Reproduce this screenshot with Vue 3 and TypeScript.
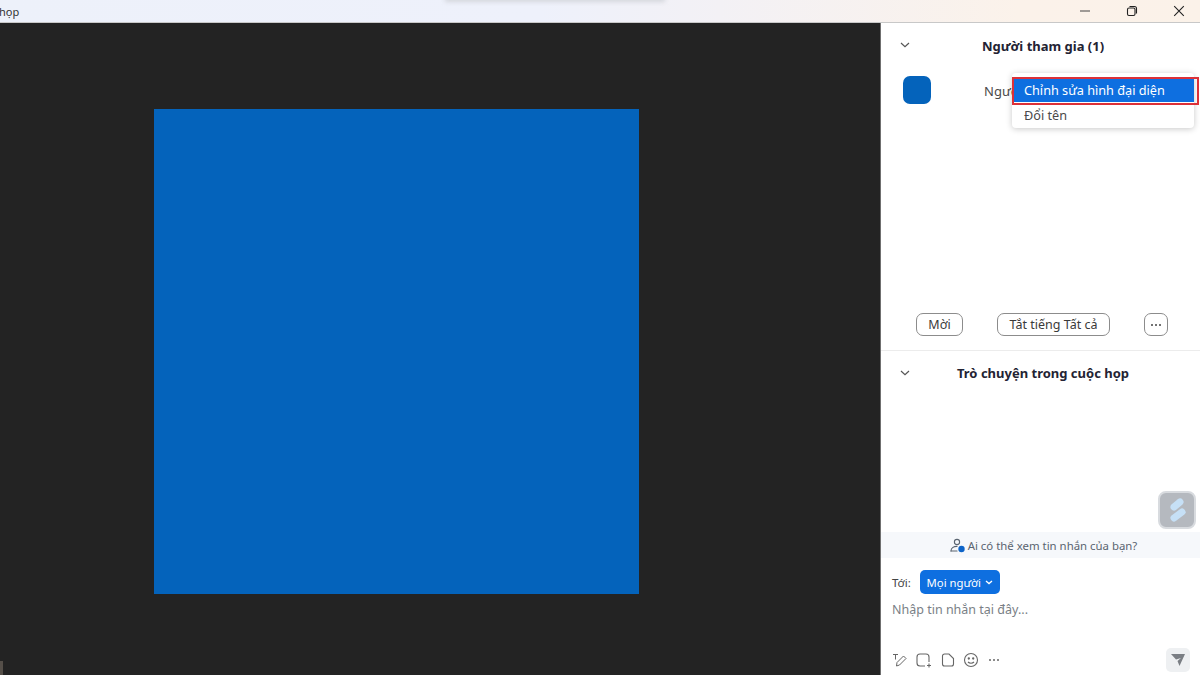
<template>
  <div class="window">
    <header class="titlebar">
      <span class="title">họp</span>
      <div class="win-controls">
        <svg width="12" height="12" viewBox="0 0 12 12"><path d="M1 6h10" stroke="#444" stroke-width="1" fill="none" /></svg>
        <svg width="12" height="12" viewBox="0 0 12 12" fill="none" stroke="#222" stroke-width="1.1">
          <rect x="1.5" y="3" width="7.5" height="7.5" rx="1.5" />
          <path d="M3.5 1.5h5a2 2 0 0 1 2 2v5" />
        </svg>
        <svg width="12" height="12" viewBox="0 0 12 12"><path d="M1.2 1.2l9.6 9.6M10.8 1.2l-9.6 9.6" stroke="#222" stroke-width="1.1" fill="none" /></svg>
      </div>
      <div class="top-shadow"></div>
    </header>

    <div class="body">
      <main class="stage">
        <div class="video-tile"></div>
      </main>

      <aside class="panel">
        <section class="participants">
          <div class="section-head">
            <svg class="chev" width="10" height="6" viewBox="0 0 10 6"><path d="M1 1l4 3.6L9 1" stroke="#555" stroke-width="1.2" fill="none" /></svg>
            <h2>Người tham gia (1)</h2>
          </div>
          <div class="person">
            <div class="avatar"></div>
            <span class="person-name">Người</span>
            <div class="menu">
              <div v-for="item in menuItems" :key="item.label" class="menu-item" :class="{ active: item.active }">{{ item.label }}</div>
              <div class="red-box"></div>
            </div>
          </div>
          <div class="actions">
            <button type="button" class="btn btn-invite">Mời</button>
            <button type="button" class="btn btn-mute">Tắt tiếng Tất cả</button>
            <button type="button" class="btn btn-more">
              <svg width="12" height="4" viewBox="0 0 12 4" fill="#444"><circle cx="2" cy="2" r="1" /><circle cx="6" cy="2" r="1" /><circle cx="10" cy="2" r="1" /></svg>
            </button>
          </div>
        </section>

        <section class="chat">
          <div class="section-head chat-head">
            <svg class="chev" width="10" height="6" viewBox="0 0 10 6"><path d="M1 1l4 3.6L9 1" stroke="#555" stroke-width="1.2" fill="none" /></svg>
            <h2>Trò chuyện trong cuộc họp</h2>
          </div>
          <div class="messages">
            <div class="float-badge">
              <svg width="22" height="28" viewBox="0 0 22 28" fill="none" stroke="#c6e0f6" stroke-width="7" stroke-linecap="round">
                <path d="M14 6L8 11" />
                <path d="M16 16L8 22" />
              </svg>
            </div>
          </div>
          <div class="privacy">
            <svg width="16" height="15" viewBox="0 0 16 15" fill="none">
              <circle cx="7" cy="4" r="2.6" stroke="#5a6470" stroke-width="1.1" />
              <path d="M1 13c0-3 3-4.600 6-4.600" stroke="#5a6470" stroke-width="1.100" stroke-linecap="round" />
              <path d="M1 13h6" stroke="#5a6470" stroke-width="1.100" stroke-linecap="round" />
              <circle cx="11.500" cy="11" r="3.200" fill="#0e64c8" />
            </svg>
            <span>Ai có thể xem tin nhắn của bạn?</span>
          </div>
          <div class="to-row">
            <span class="to-label">Tới:</span>
            <button type="button" class="to-btn">
              Mọi người
              <svg width="8" height="5" viewBox="0 0 8 5"><path d="M1 1l3 2.600L7 1" stroke="#fff" stroke-width="1.300" fill="none" /></svg>
            </button>
          </div>
          <div class="placeholder">Nhập tin nhắn tại đây...</div>
          <div class="toolbar">
            <svg width="16" height="16" viewBox="0 0 16 16" fill="none" stroke="#666" stroke-width="1">
              <path d="M1 2.500h5M3.500 2.500v5" />
              <path d="M4.500 14l.5-3.500L11.500 4l2.500 2.500L7.500 13z" />
            </svg>
            <svg width="17" height="16" viewBox="0 0 17 16" fill="none" stroke="#666" stroke-width="1.100">
              <path d="M9 14H4a3 3 0 0 1-3-3V5a3 3 0 0 1 3-3h6a3 3 0 0 1 3 3v5" />
              <path d="M13 11.500v4M11 13.500h4" />
            </svg>
            <svg width="14" height="16" viewBox="0 0 14 16" fill="none" stroke="#666" stroke-width="1.100">
              <path d="M8 2H3.500A2 2 0 0 0 1.500 4v8a2 2 0 0 0 2 2h7a2 2 0 0 0 2-2V6.500z" />
            </svg>
            <svg width="16" height="16" viewBox="0 0 16 16" fill="none" stroke="#666" stroke-width="1.100">
              <circle cx="8" cy="8" r="6.500" />
              <circle cx="5.800" cy="6.500" r=".6" fill="#666" />
              <circle cx="10.200" cy="6.500" r=".6" fill="#666" />
              <path d="M5 10c1.500 1.600 4.500 1.600 6 0" />
            </svg>
            <svg class="tool-more" width="12" height="4" viewBox="0 0 12 4" fill="#666"><circle cx="2" cy="2" r="1" /><circle cx="6" cy="2" r="1" /><circle cx="10" cy="2" r="1" /></svg>
            <div class="send">
              <svg width="14" height="12" viewBox="0 0 14 12" fill="#7a7e84"><path d="M0 0h14L8.500 12 6.500 7 10 4 5 5.500z" /></svg>
            </div>
          </div>
        </section>
      </aside>
    </div>
    <div class="corner-mark"></div>
  </div>
</template>

<script setup lang="ts">
interface MenuItem {
  label: string
  active?: boolean
}

const menuItems: MenuItem[] = [
  { label: 'Chỉnh sửa hình đại diện', active: true },
  { label: 'Đổi tên' },
]
</script>

<style>
html,
body {
  margin: 0;
  overflow: hidden;
}
</style>

<style scoped>
.window {
  position: relative;
  width: 1200px;
  height: 675px;
  display: flex;
  flex-direction: column;
  overflow: hidden;
  font-family: "Noto Sans", "Open Sans", sans-serif;
  color: #242424;
}

.titlebar {
  position: relative;
  height: 22px;
  flex: none;
  display: flex;
  align-items: center;
  justify-content: space-between;
  overflow: hidden;
  background: linear-gradient(90deg, #edf1fa 0%, #eef1fb 45%, #f3f1f5 60%, #fbf2ea 85%, #fbf2e9 100%);
  border-bottom: 1px solid #c8c8c8;
}

.top-shadow {
  position: absolute;
  left: 445px;
  top: -4px;
  width: 220px;
  height: 6px;
  background: #d4d6dc;
  filter: blur(2px);
}

.title {
  margin-left: -1px;
  font-size: 11px;
  color: #333;
}

.win-controls {
  display: flex;
  align-items: center;
  gap: 35px;
  padding-right: 15px;
}

.body {
  flex: 1;
  min-height: 0;
  display: flex;
}

.stage {
  width: 880px;
  flex: none;
  padding: 86px 0 0 154px;
  box-sizing: border-box;
  background: #232323;
}

.video-tile {
  width: 485px;
  height: 485px;
  background: #0463bb;
}

.panel {
  flex: 1;
  min-width: 0;
  display: flex;
  flex-direction: column;
  background: #fff;
  border-left: 1px solid #6f6f6f;
}

.participants {
  height: 328px;
  flex: none;
  display: flex;
  flex-direction: column;
  box-sizing: border-box;
  border-bottom: 1px solid #ececec;
}

.section-head {
  position: relative;
  height: 47px;
  display: flex;
  align-items: center;
  justify-content: center;
}

.section-head h2 {
  margin: 0 0 2px;
  font-size: 13px;
  font-weight: 700;
  color: #232333;
  padding-left: 5px;
}

.chev {
  position: absolute;
  left: 19px;
  top: 19px;
}

.person {
  position: relative;
  display: flex;
  align-items: center;
  padding: 6px 0 0 22px;
  height: 28px;
}

.avatar {
  width: 28px;
  height: 28px;
  flex: none;
  border-radius: 7px;
  background: #0463bb;
}

.person-name {
  margin-left: 53px;
  padding-top: 2px;
  font-size: 13px;
  color: #4a4a4a;
}

.menu {
  position: absolute;
  left: 131px;
  top: 3px;
  width: 182px;
  padding: 6px 0 1px;
  background: #fff;
  border-radius: 4px;
  box-shadow: 0 1px 6px rgba(0, 0, 0, 0.22);
}

.menu-item {
  height: 25px;
  line-height: 27px;
  padding-left: 12px;
  font-size: 12.7px;
  color: #4a4a4a;
}

.menu-item.active {
  height: 23px;
  line-height: 23px;
  margin-left: 2px;
  padding-left: 10px;
  background: #0e6fe0;
  color: #fff;
}

.red-box {
  position: absolute;
  left: 0;
  top: 4px;
  width: 187px;
  height: 28px;
  box-sizing: border-box;
  border: 2.5px solid #dc3038;
  pointer-events: none;
}

.actions {
  margin-top: auto;
  padding: 0 0 14px 35px;
  display: flex;
  align-items: center;
}

.btn {
  height: 23px;
  padding: 0;
  background: #fff;
  border: 1.5px solid #8c8c8c;
  border-radius: 7px;
  font: inherit;
  font-size: 12.500px;
  color: #3a3a3a;
  display: flex;
  align-items: center;
  justify-content: center;
}

.btn-invite {
  width: 47px;
}

.btn-mute {
  width: 113px;
  margin-left: 34px;
}

.btn-more {
  width: 24px;
  margin-left: 34px;
}

.chat {
  flex: 1;
  min-height: 0;
  display: flex;
  flex-direction: column;
}

.chat-head {
  height: 45px;
  flex: none;
}

.messages {
  flex: 1;
  min-height: 0;
  position: relative;
}

.float-badge {
  position: absolute;
  right: 4px;
  bottom: 3px;
  width: 34px;
  height: 34px;
  display: flex;
  align-items: center;
  justify-content: center;
  background: #b5b9bf;
  border: 2.500px solid #d8dbdf;
  border-radius: 8px;
}

.privacy {
  height: 26px;
  flex: none;
  display: flex;
  align-items: center;
  justify-content: center;
  gap: 2px;
  padding-left: 6px;
  box-sizing: border-box;
  background: #f6f8fb;
  font-size: 11.400px;
  color: #5a6470;
}

.to-row {
  flex: none;
  display: flex;
  align-items: center;
  padding: 12px 0 0 11px;
}

.to-label {
  font-size: 11.500px;
  color: #444;
}

.to-btn {
  margin-left: 9px;
  width: 80px;
  height: 24px;
  padding: 0;
  display: flex;
  align-items: center;
  justify-content: center;
  gap: 4px;
  border: none;
  border-radius: 5px;
  background: #0e6fe0;
  color: #fff;
  font: inherit;
  font-size: 11.300px;
}

.placeholder {
  flex: none;
  height: 55px;
  box-sizing: border-box;
  padding: 7px 0 0 11px;
  font-size: 12.500px;
  color: #7a7f86;
}

.toolbar {
  flex: none;
  display: flex;
  align-items: center;
  gap: 8px;
  padding: 0 10px 4px 11px;
  height: 26px;
  box-sizing: border-box;
}

.tool-more {
  margin-left: 1px;
}

.send {
  margin-left: auto;
  width: 24px;
  height: 24px;
  display: flex;
  align-items: center;
  justify-content: center;
  background: #eef0f2;
  border-radius: 5px;
}

.corner-mark {
  position: absolute;
  left: 0;
  bottom: 0;
  width: 3px;
  height: 14px;
  background: #6b625a;
  opacity: 0.7;
}
</style>
